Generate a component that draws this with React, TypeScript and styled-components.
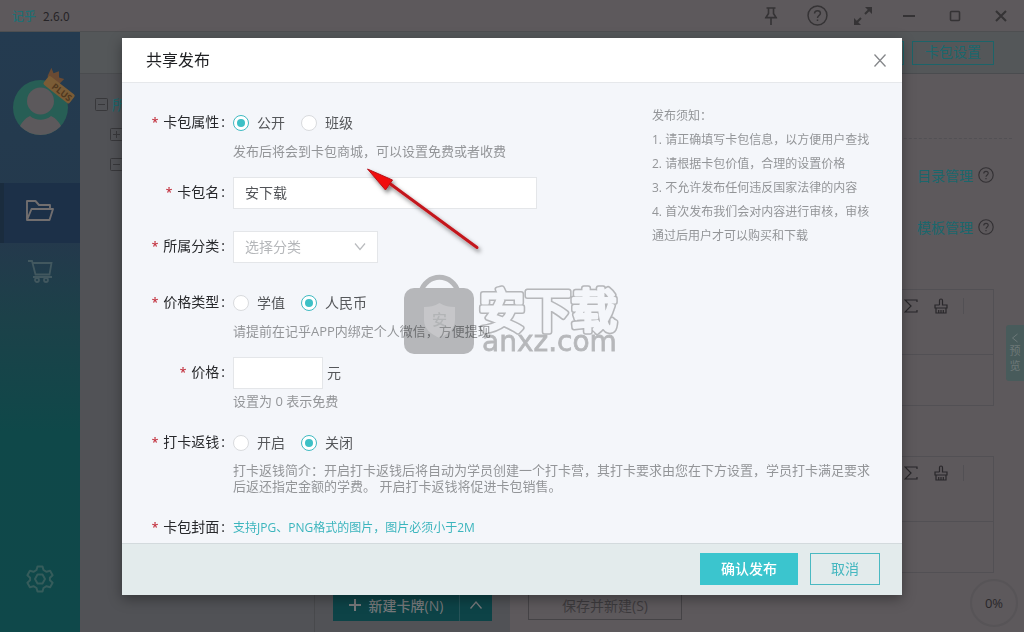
import React from "react";
import styled, { createGlobalStyle } from "styled-components";

const Global = createGlobalStyle`
  *, *::before, *::after { box-sizing: border-box; }
  body { margin: 0; background: #5c595c; }
  body, button, input, select { font-family: "Open Sans", "Noto Sans CJK SC", sans-serif; font-size: 14px; }
  button { padding: 0; border: 0; background: none; color: inherit; cursor: pointer; }
  a { text-decoration: none; color: inherit; }
  p, h1, h2 { margin: 0; font-weight: 400; }
`;

const Page = styled.div`
  position: relative;
  display: flex;
  flex-direction: column;
  min-height: 100vh;
  height: 100vh;
  overflow: hidden;
  color: #29282a;
`;

/* ---- window frame ---- */
const TitleBar = styled.header`
  display: flex;
  align-items: center;
  flex: none;
  height: 32px;
  padding-left: 12px;
  background: #5d595c;
  border-bottom: 1px solid #4e4f51;
`;
const Brand = styled.span`
  font-size: 12px;
  font-weight: 500;
  color: #206f74;
`;
const Version = styled.span`
  margin-left: 7px;
  font-family: "Noto Sans CJK SC", sans-serif;
  font-size: 12px;
  color: #262427;
`;
const WindowButtons = styled.div`
  display: flex;
  margin-left: auto;
`;
const WindowButton = styled.button`
  display: grid;
  place-items: center;
  width: 46px;
  height: 30px;
  color: #353335;
`;
const Workspace = styled.div`
  display: flex;
  flex: 1;
  min-height: 0;
`;

/* ---- side navigation ---- */
const Sidebar = styled.nav`
  display: flex;
  flex-direction: column;
  flex: none;
  width: 80px;
  background: linear-gradient(#243b50 0, #24394c 210px, #1c4149 285px, #0f4849 400px, #0f484a 100%);
`;
const Account = styled.div`
  height: 151px;
  padding-top: 36px;
`;
const NavItem = styled.a<{ $active?: boolean }>`
  display: grid;
  place-items: center;
  height: 60px;
  padding: 0 4px 4px 0;
  border-left: 4px solid ${(p) => (p.$active ? "#1a2c3e" : "transparent")};
  background: ${(p) => (p.$active ? "#1c3048" : "transparent")};
  color: ${(p) => (p.$active ? "#716e6f" : "#42585f")};
`;
const NavSpacer = styled.div`
  flex: 1;
`;
const SettingsItem = styled(NavItem)`
  margin-bottom: 21px;
  color: #355c5b;
`;

/* ---- content behind the dialog ---- */
const Content = styled.main`
  display: flex;
  flex-direction: column;
  flex: 1;
  min-width: 0;
`;
const Toolbar = styled.div`
  display: flex;
  justify-content: flex-end;
  align-items: center;
  flex: none;
  gap: 8px;
  height: 42px;
  padding-right: 30px;
  background: #545759;
  border-bottom: 1px solid #4a4c4f;
`;
const ToolButton = styled.button`
  width: 82px;
  height: 24px;
  padding-bottom: 2px;
  border: 1px solid #1c6469;
  color: #1a676d;
  line-height: 20px;
`;
const Columns = styled.div`
  display: flex;
  flex: 1;
  min-height: 0;
`;
const TreePane = styled.section`
  flex: none;
  width: 235px;
  padding: 15px 0 0 15px;
  background: #515256;
  border-right: 1px solid #48494c;
`;
const TreeRow = styled.div<{ $level: number }>`
  display: flex;
  align-items: center;
  gap: 4px;
  height: 30px;
  padding-left: ${(p) => p.$level * 15}px;
  color: #1a676d;
`;
const CardPane = styled.section`
  display: flex;
  align-items: flex-end;
  flex: none;
  width: 195px;
  padding: 0 18px 11px;
  background: #515256;
`;
const SplitButton = styled.div`
  display: flex;
  flex: 1;
  height: 32px;
  background: #0d4347;
  color: #77797b;
`;
const NewCard = styled.button`
  display: flex;
  flex: 1;
  align-items: center;
  justify-content: center;
  gap: 8px;
  border-right: 1px solid #275358;
  font-weight: 500;
`;
const NewCardMore = styled.button`
  display: grid;
  place-items: center;
  width: 32px;
`;
const Editor = styled.section`
  display: flex;
  flex-direction: column;
  flex: 1;
  min-width: 0;
  padding: 0 12px 12px 18px;
  background: #5d595c;
`;
const EditorHead = styled.div`
  flex: none;
  height: 65px;
  margin-bottom: 10px;
  border-bottom: 1px dashed #525054;
`;
const ManageRow = styled.div`
  display: flex;
  justify-content: flex-end;
  align-items: center;
  flex: none;
  gap: 5px;
  height: 52px;
  padding-right: 18px;
  color: #333134;
`;
const ManageLink = styled.a`
  color: #1a676d;
`;
const FieldBoxes = styled.div`
  display: grid;
  flex: none;
  gap: 50px;
  margin: 36px 18px 0 0;
`;
const FieldBox = styled.div`
  height: 117px;
  border: 1px solid #525054;
`;
const FieldTools = styled.div`
  display: flex;
  justify-content: flex-end;
  height: 65px;
  padding: 8px 29px 0 0;
  gap: 14px;
  border-bottom: 1px solid #525054;
  color: #29272a;
`;
const FieldTool = styled.button`
  display: grid;
  place-items: center;
  width: 16px;
  height: 16px;
`;
const FieldDivider = styled.span`
  width: 1px;
  height: 16px;
  background: #525054;
`;
const SaveNew = styled.button`
  width: 154px;
  height: 30px;
  margin-top: auto;
  border: 1px solid #454346;
  color: #3d3b3e;
`;
const PreviewTab = styled.button`
  position: absolute;
  top: 325px;
  right: 0;
  display: flex;
  flex-direction: column;
  align-items: center;
  justify-content: center;
  width: 18px;
  height: 56px;
  border-radius: 3px 0 0 3px;
  background: #485b5b;
  color: #6d7878;
  font-size: 11px;
  line-height: 15px;
`;
const Progress = styled.div`
  position: absolute;
  right: 6px;
  bottom: 5px;
  display: grid;
  place-items: center;
  width: 48px;
  height: 48px;
  border: 2px solid #575457;
  border-radius: 50%;
  font-size: 13px;
  color: #29272a;
`;

/* ---- dialog ---- */
const Overlay = styled.div`
  position: fixed;
  inset: 0;
  display: flex;
  justify-content: center;
  align-items: flex-start;
  padding: 38px 16px 0;
`;
const Dialog = styled.form`
  position: relative;
  width: 100%;
  max-width: 780px;
  background: #f4f6fa;
  box-shadow: 0 4px 12px rgba(0, 0, 0, 0.35);
`;
const DialogHead = styled.header`
  display: flex;
  align-items: center;
  justify-content: space-between;
  height: 45px;
  padding: 0 16px 0 24px;
  background: #fff;
  border-bottom: 1px solid #e6e8eb;
`;
const DialogTitle = styled.h1`
  padding-bottom: 2px;
  font-size: 16px;
  color: #1f2023;
`;
const CloseButton = styled.button`
  display: grid;
  place-items: center;
  width: 12px;
  height: 12px;
  color: #85878a;
`;
const DialogBody = styled.div`
  display: flex;
  justify-content: space-between;
  height: calc(100vh - 172px);
  padding: 24px 30px 0 0;
  overflow-y: auto;
  scrollbar-width: none;
`;
const Fields = styled.div`
  flex: 1;
  min-width: 0;
`;
const Row = styled.div<{ $gap: number }>`
  display: flex;
  margin-bottom: ${(p) => p.$gap}px;
`;
const Caption = styled.label`
  flex: none;
  width: 111px;
  padding-right: 8px;
  text-align: right;
  line-height: 30px;
  color: #27282b;
  white-space: nowrap;

  &::before {
    content: "*";
    margin-right: 5px;
    font-size: 12px;
    font-weight: 600;
    color: #c22f3c;
  }
  &::after {
    content: ":";
    margin-left: 2px;
  }
`;
const Control = styled.div`
  position: relative;
  flex: 1;
  min-width: 0;
`;
const Line = styled.div`
  display: flex;
  align-items: center;
  height: 32px;
  gap: 16px;
  color: #55575a;
`;
const PriceLine = styled(Line)`
  gap: 4px;
`;
const Choice = styled.label`
  display: flex;
  align-items: center;
  gap: 8px;
`;
const ControlText = styled.span`
  padding-bottom: 2px;
`;
const Radio = styled.input`
  appearance: none;
  display: grid;
  place-items: center;
  width: 16px;
  height: 16px;
  margin: 0;
  border: 1px solid #d9dbde;
  border-radius: 50%;
  background: #fff;

  &:checked { border-color: #3fbac2; }
  &:checked::after {
    content: "";
    width: 8px;
    height: 8px;
    border-radius: 50%;
    background: #3cc0c6;
  }
`;
const TextInput = styled.input<{ $width: number }>`
  width: ${(p) => p.$width}px;
  height: 32px;
  padding: 0 11px 2px;
  border: 1px solid #e4e6e9;
  background: #fff;
  color: #505256;
  outline: none;
`;
const SelectBox = styled.div`
  position: relative;
  width: 145px;
  height: 32px;
`;
const Select = styled.select`
  appearance: none;
  width: 100%;
  height: 32px;
  padding: 0 11px 2px;
  border: 1px solid #e4e6e9;
  border-radius: 0;
  background: #fff;
  color: #b5b7ba;
  outline: none;
`;
const SelectArrow = styled.svg`
  position: absolute;
  top: 12px;
  right: 12px;
  pointer-events: none;
`;
const Hint = styled.p`
  line-height: 24px;
  font-size: 13px;
  color: #939598;
`;
const LongHint = styled(Hint)`
  padding-top: 3px;
  line-height: 16px;
`;
const CoverHint = styled.p`
  line-height: 32px;
  font-size: 12px;
  color: #3bb5bd;
`;
const Intro = styled.div`
  display: flex;
`;
const Notice = styled.aside`
  flex: none;
  width: 220px;
  margin-top: -3px;
  line-height: 24px;
  font-size: 12px;
  color: #939598;
`;
const Main = styled.div`
  flex: 1;
  min-width: 0;
`;
const DialogFoot = styled.footer`
  display: flex;
  align-items: flex-start;
  justify-content: flex-end;
  gap: 12px;
  height: 52px;
  padding: 9px 22px 0 0;
  background: #e3ebec;
  border-top: 1px solid #d3dadd;
`;
const Action = styled.button<{ $primary?: boolean }>`
  height: 32px;
  padding: 0 20px 2px;
  border: 1px solid ${(p) => (p.$primary ? "#3bc5ce" : "#4ab9c2")};
  background: ${(p) => (p.$primary ? "#3bc5ce" : "transparent")};
  color: ${(p) => (p.$primary ? "#fff" : "#45b7c0")};
  font-weight: ${(p) => (p.$primary ? 500 : 400)};
`;
const Marks = styled.svg`
  position: absolute;
  top: 0;
  left: 0;
  pointer-events: none;
`;

const HelpIcon = ({ size }: { size: number }) => (
  <svg width={size} height={size} viewBox="0 0 20 20" fill="none" stroke="currentColor" strokeWidth="1.4">
    <circle cx="10" cy="10" r="9" />
    <path d="M7.2 8.2c0-1.8 1.2-2.8 2.8-2.8s2.8 1 2.8 2.5c0 2-2.8 2.2-2.8 4.4M10 13.8v1.5" />
  </svg>
);

const Expander = ({ open }: { open: boolean }) => (
  <svg width="13" height="13" viewBox="0 0 13 13" fill="none" stroke="#38383b">
    <rect x=".5" y=".5" width="12" height="12" rx="1" />
    <path d={open ? "M3 6.5h7" : "M3 6.5h7M6.5 3v7"} />
  </svg>
);

const Avatar = () => (
  <svg width="80" height="72" viewBox="0 68 80 72">
    <defs>
      <clipPath id="face"><circle cx="40.500" cy="107.500" r="27.500" /></clipPath>
    </defs>
    <circle cx="40.500" cy="107.500" r="27.500" fill="#275e55" />
    <g clipPath="url(#face)" fill="#5c595c">
      <path d="M18 130c3-7 7-12 12-14 6 5 15 5 21 0 5 2 9 7 12 14l-8 10H26z" />
      <circle cx="40.500" cy="101" r="13.500" />
    </g>
    <g transform="translate(59 89) rotate(38)">
      <path d="M-17-3l-2-9 5 3 3-5 4 5 5-2-1 8z" fill="#6a4a33" />
      <rect x="-16" y="-5" width="33" height="11" rx="2" fill="#7a5c36" />
      <text x="-7" y="4" fontSize="9" fontWeight="700" fill="#50381f">PLUS</text>
    </g>
  </svg>
);

const FieldToolbar = () => (
  <FieldTools>
    <FieldTool type="button" aria-label="公式">
      <svg width="14" height="14" viewBox="0 0 14 14" fill="none" stroke="currentColor" strokeWidth="1.2">
        <path d="M13 3V1H1l6 6-6 6h12v-2" />
      </svg>
    </FieldTool>
    <FieldTool type="button" aria-label="清除格式">
      <svg width="14" height="16" viewBox="0 0 14 16" fill="none" stroke="currentColor" strokeWidth="1.2">
        <path d="M5.500 7V2.500a1.500 1.500 0 0 1 3 0V7H13v3H1V7h4.500M2 10v5h10v-5M4.700 15v-3M7 15v-3M9.300 15v-3" />
      </svg>
    </FieldTool>
    <FieldDivider />
  </FieldTools>
);

function Background() {
  return (
    <>
      <TitleBar>
        <Brand>记乎</Brand>
        <Version>2.6.0</Version>
        <WindowButtons>
          <WindowButton aria-label="置顶">
            <svg width="16" height="20" viewBox="0 0 16 20" fill="none" stroke="currentColor" strokeWidth="1.6">
              <path d="M3.500 2h9M5.500 2v5.500L3 11.500h10L10.500 7.500V2M2 11.700h12M8 12v7" />
            </svg>
          </WindowButton>
          <WindowButton aria-label="帮助"><HelpIcon size={21} /></WindowButton>
          <WindowButton aria-label="全屏">
            <svg width="20" height="20" viewBox="0 0 20 20" fill="none" stroke="currentColor" strokeWidth="2">
              <path d="M12 8l5-5M8 12l-5 5" />
              <path d="M12 1h7v7zM1 12v7h7z" fill="currentColor" stroke="none" />
            </svg>
          </WindowButton>
          <WindowButton aria-label="最小化">
            <svg width="12" height="12" viewBox="0 0 12 12"><path d="M0 6h12" stroke="currentColor" strokeWidth="2" /></svg>
          </WindowButton>
          <WindowButton aria-label="最大化">
            <svg width="12" height="12" viewBox="0 0 12 12" fill="none"><rect x="1.500" y="1.500" width="9" height="9" rx="1" stroke="currentColor" strokeWidth="1.600" /></svg>
          </WindowButton>
          <WindowButton aria-label="关闭窗口">
            <svg width="12" height="12" viewBox="0 0 12 12"><path d="M1 1l10 10M11 1L1 11" stroke="currentColor" strokeWidth="2" /></svg>
          </WindowButton>
        </WindowButtons>
      </TitleBar>
      <Workspace>
        <Sidebar>
          <Account><Avatar /></Account>
          <NavItem href="#cards" $active aria-label="卡包">
            <svg width="28" height="22" viewBox="0 0 28 22" fill="none" stroke="currentColor" strokeWidth="1.900" strokeLinejoin="round">
              <path d="M1 20V1h8.500l3.500 4h11v4M1 20l4.500-11H27l-3.500 11z" />
            </svg>
          </NavItem>
          <NavItem href="#shop" aria-label="商城">
            <svg width="26" height="24" viewBox="0 0 26 24" fill="none" stroke="currentColor" strokeWidth="1.800">
              <path d="M1 2h4l3.500 13.500h14L24.500 4H6M6 18h19" />
              <circle cx="10" cy="21" r="2" /><circle cx="19" cy="21" r="2" />
            </svg>
          </NavItem>
          <NavSpacer />
          <SettingsItem href="#settings" aria-label="设置">
            <svg width="28" height="28" viewBox="0 0 28 28" fill="none" stroke="currentColor" strokeWidth="2" strokeLinejoin="round">
              <path d="M11.500 1.500h5l1 3.500 3 1.800 3.600-1 2.500 4.400-2.700 2.600v2.400l2.700 2.600-2.500 4.400-3.600-1-3 1.800-1 3.500h-5l-1-3.500-3-1.800-3.600 1-2.500-4.400 2.700-2.600v-2.400L1.400 10.200l2.500-4.400 3.600 1 3-1.800z" />
              <path d="M11.500 9.500h5L19 14l-2.500 4.500h-5L9 14z" />
            </svg>
          </SettingsItem>
        </Sidebar>
        <Content>
          <Toolbar>
            <ToolButton>卡包分享</ToolButton>
            <ToolButton>卡包设置</ToolButton>
          </Toolbar>
          <Columns>
            <TreePane>
              <TreeRow $level={0}><Expander open />所有目录</TreeRow>
              <TreeRow $level={1}><Expander open={false} /></TreeRow>
              <TreeRow $level={1}><Expander open /></TreeRow>
            </TreePane>
            <CardPane>
              <SplitButton>
                <NewCard>
                  <svg width="12" height="12" viewBox="0 0 12 12"><path d="M6 0v12M0 6h12" stroke="currentColor" strokeWidth="2" /></svg>
                  新建卡牌(N)
                </NewCard>
                <NewCardMore aria-label="更多">
                  <svg width="12" height="8" viewBox="0 0 12 8" fill="none"><path d="M.5 7.500L6 1l5.500 6.500" stroke="currentColor" strokeWidth="1.300" /></svg>
                </NewCardMore>
              </SplitButton>
            </CardPane>
            <Editor>
              <EditorHead />
              <ManageRow><ManageLink href="#catalog">目录管理</ManageLink><HelpIcon size={16} /></ManageRow>
              <ManageRow><ManageLink href="#template">模板管理</ManageLink><HelpIcon size={16} /></ManageRow>
              <FieldBoxes>
                <FieldBox><FieldToolbar /></FieldBox>
                <FieldBox><FieldToolbar /></FieldBox>
              </FieldBoxes>
              <SaveNew>保存并新建(S)</SaveNew>
            </Editor>
          </Columns>
        </Content>
      </Workspace>
      <PreviewTab>
        <svg width="8" height="10" viewBox="0 0 8 10" fill="none"><path d="M6.500 1l-5 4 5 4" stroke="currentColor" /></svg>
        <span>预</span>
        <span>览</span>
      </PreviewTab>
      <Progress>0%</Progress>
    </>
  );
}

function Choices({ name, options, checked }: { name: string; options: string[]; checked: number }) {
  return (
    <Line>
      {options.map((option, i) => (
        <Choice key={option}>
          <Radio type="radio" name={name} id={`${name}-${i}`} defaultChecked={i === checked} />
          <ControlText>{option}</ControlText>
        </Choice>
      ))}
    </Line>
  );
}

export default function App() {
  return (
    <Page>
      <Global />
      <Background />
      <Overlay>
        <Dialog onSubmit={(e) => e.preventDefault()}>
          <DialogHead>
            <DialogTitle>共享发布</DialogTitle>
            <CloseButton type="button" aria-label="关闭">
              <svg width="12" height="13" viewBox="0 0 12 13"><path d="M.5.5l11 12M11.500.5l-11 12" stroke="currentColor" strokeWidth="1.300" /></svg>
            </CloseButton>
          </DialogHead>
          <DialogBody>
            <Main>
              <Intro>
                <Fields>
                  <Row $gap={14}>
                    <Caption htmlFor="kind-0">卡包属性</Caption>
                    <Control>
                      <Choices name="kind" options={["公开", "班级"]} checked={0} />
                      <Hint>发布后将会到卡包商城，可以设置免费或者收费</Hint>
                    </Control>
                  </Row>
                  <Row $gap={22}>
                    <Caption htmlFor="pack-name">卡包名</Caption>
                    <Control>
                      <Line><TextInput id="pack-name" $width={304} defaultValue="安下载" /></Line>
                    </Control>
                  </Row>
                  <Row $gap={24}>
                    <Caption htmlFor="category">所属分类</Caption>
                    <Control>
                      <SelectBox>
                        <Select id="category" defaultValue="">
                          <option value="">选择分类</option>
                        </Select>
                        <SelectArrow width="12" height="8" viewBox="0 0 12 8" fill="none">
                          <path d="M1 .5l5 6 5-6" stroke="#b9bbbe" strokeWidth="1.200" />
                        </SelectArrow>
                      </SelectBox>
                    </Control>
                  </Row>
                </Fields>
                <Notice>
                  <p>发布须知：</p>
                  <p>1. 请正确填写卡包信息，以方便用户查找</p>
                  <p>2. 请根据卡包价值，合理的设置价格</p>
                  <p>3. 不允许发布任何违反国家法律的内容</p>
                  <p>4. 首次发布我们会对内容进行审核，审核通过后用户才可以购买和下载</p>
                </Notice>
              </Intro>
              <Row $gap={14}>
                <Caption htmlFor="pay-0">价格类型</Caption>
                <Control>
                  <Choices name="pay" options={["学值", "人民币"]} checked={1} />
                  <Hint>请提前在记乎APP内绑定个人微信，方便提现</Hint>
                </Control>
              </Row>
              <Row $gap={14}>
                <Caption htmlFor="price">价格</Caption>
                <Control>
                  <PriceLine><TextInput id="price" $width={90} /><ControlText>元</ControlText></PriceLine>
                  <Hint>设置为 0 表示免费</Hint>
                </Control>
              </Row>
              <Row $gap={18}>
                <Caption htmlFor="cashback-0">打卡返钱</Caption>
                <Control>
                  <Choices name="cashback" options={["开启", "关闭"]} checked={1} />
                  <LongHint>
                    打卡返钱简介：开启打卡返钱后将自动为学员创建一个打卡营，其打卡要求由您在下方设置，学员打卡满足要求后返还指定金额的学费。 开启打卡返钱将促进卡包销售。
                  </LongHint>
                </Control>
              </Row>
              <Row $gap={0}>
                <Caption>卡包封面</Caption>
                <Control><CoverHint>支持JPG、PNG格式的图片，图片必须小于2M</CoverHint></Control>
              </Row>
            </Main>
          </DialogBody>
          <DialogFoot>
            <Action type="submit" $primary>确认发布</Action>
            <Action type="button">取消</Action>
          </DialogFoot>

          <Marks width="780" height="557" viewBox="122 38 780 557" aria-hidden="true">
            <defs>
              <filter id="soft" x="-20%" y="-20%" width="140%" height="150%">
                <feDropShadow dx="2" dy="3" stdDeviation="2" floodColor="#000" floodOpacity=".5" />
              </filter>
              <mask id="bubble" maskUnits="userSpaceOnUse" x="470" y="270" width="160" height="80">
                <g fontFamily="Noto Sans CJK SC, sans-serif" fontSize="46" fontWeight="500" strokeLinejoin="round" strokeLinecap="round">
                  <text x="479" y="327" fill="#fff" stroke="#fff" strokeWidth="6">安下载</text>
                  <text x="479" y="327" fill="#000" stroke="#000" strokeWidth="3">安下载</text>
                </g>
              </mask>
            </defs>
            <g opacity=".25">
              <path d="M421 289a19 19 0 0 1 37 0" fill="none" stroke="#000" strokeWidth="5" transform="translate(0 3)" />
              <rect x="404" y="288" width="70" height="66" rx="10" />
              <rect x="470" y="270" width="160" height="80" mask="url(#bubble)" />
              <text x="482" y="351" fontFamily="DejaVu Sans, sans-serif" fontSize="28" stroke="#000" strokeWidth=".8">anxz.com</text>
            </g>
            <path d="M439.500 303c5 3 10 4 15.500 4v13c0 9-7 14-15.500 18-8.500-4-15.500-9-15.500-18v-13c5.500 0 10.500-1 15.500-4z" fill="#fff" opacity=".22" />
            <text x="432" y="325" fontFamily="Noto Sans CJK SC, sans-serif" fontSize="15" fontWeight="500" fill="#b2b4b6">安</text>
            <g filter="url(#soft)">
              <path d="M385 180l92 67.500" stroke="#c3161c" strokeWidth="3" strokeLinecap="round" />
              <path d="M367.500 169l25 11-7 10z" fill="#f00a0a" stroke="#b5151b" strokeWidth="1" />
            </g>
          </Marks>
        </Dialog>
      </Overlay>
    </Page>
  );
}
